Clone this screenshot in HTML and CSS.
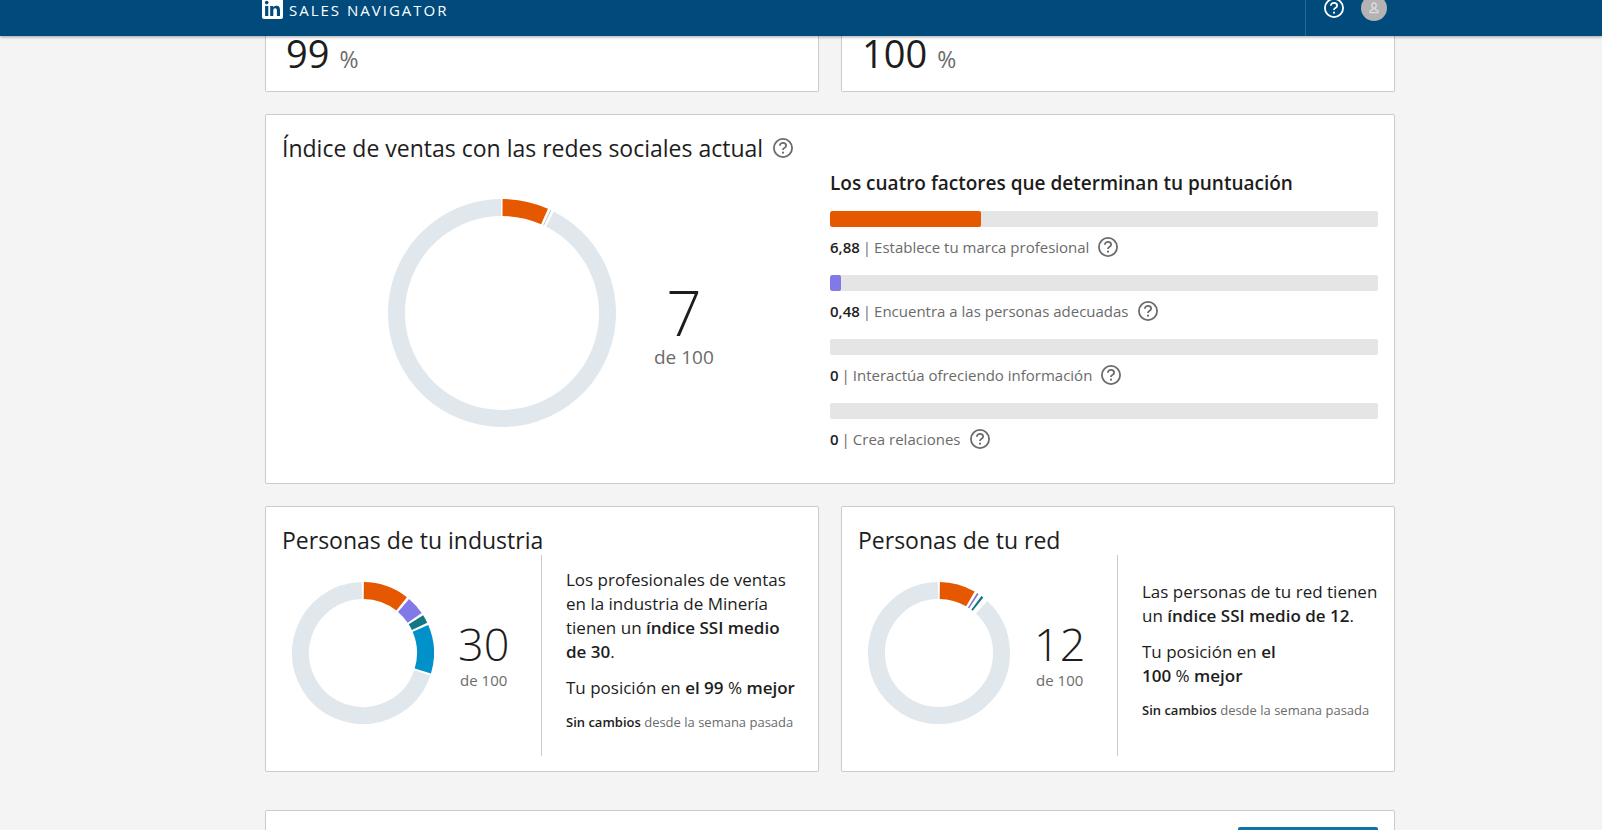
FILE: index.html
```html
<!DOCTYPE html>
<html lang="es">
<head>
<meta charset="utf-8">
<meta name="viewport" content="width=device-width, initial-scale=1">
<title>Sales Navigator</title>
<link rel="stylesheet" href="styles.css">
</head>
<body>
<svg class="defs" width="0" height="0" aria-hidden="true">
  <symbol id="help" viewBox="0 0 24 24">
    <circle cx="12" cy="12" r="9.1" fill="none" stroke="currentColor" stroke-width="1.8"/>
    <path d="M8.9 9.7C8.9 7.9 10.2 6.9 12 6.9s3.1 1 3.1 2.6c0 1.4-.8 2-1.8 2.5-.9.5-1.3.9-1.3 1.9" fill="none" stroke="currentColor" stroke-width="1.8"/>
    <circle cx="12" cy="16.7" r="1.1" fill="currentColor"/>
  </symbol>
</svg>

<header class="topbar">
  <div class="topbar-inner">
    <a class="brand" href="#">
      <svg class="logo" viewBox="0 0 21 21" aria-hidden="true">
        <rect width="21" height="21" rx="2" fill="#fff"/>
        <circle cx="4.7" cy="4.6" r="1.8" fill="#004b7c"/>
        <path d="M3.1 8h3.2v9.9H3.1zM8.2 8h3v1.4c.5-.9 1.6-1.7 3.100-1.700 3.100 0 3.700 2 3.700 4.700v5.500h-3.100V13c0-1.200 0-2.700-1.700-2.700s-1.900 1.300-1.900 2.600v5H8.200z" fill="#004b7c"/>
      </svg>
      <span class="brand-name">SALES NAVIGATOR</span>
    </a>
    <div class="tools">
      <button class="icon-btn" type="button" aria-label="Ayuda"><svg class="icon"><use href="#help"/></svg></button>
      <button class="avatar" type="button" aria-label="Perfil">
        <svg viewBox="0 0 26 26" width="26" height="26" fill="none" stroke="#dedede" stroke-width="1.3">
          <ellipse cx="13" cy="10.500" rx="2.200" ry="2.700"/>
          <path d="M11.800 13.200v1.200L9 16v1.600h8V16l-2.800-1.600v-1.200"/>
        </svg>
      </button>
    </div>
  </div>
</header>

<main class="page">
  <div class="pair">
    <section class="card rank"><span class="rank-value">99</span><span class="rank-unit">%</span></section>
    <section class="card rank"><span class="rank-value">100</span><span class="rank-unit">%</span></section>
  </div>

  <section class="card current">
    <div>
      <h2 class="title">Índice de ventas con las redes sociales actual
        <button class="icon-btn" type="button" aria-label="Ayuda"><svg class="icon"><use href="#help"/></svg></button>
      </h2>
      <div class="chart-large">
        <svg class="donut" width="228" height="228" viewBox="-114 -114 228 228" aria-hidden="true">
          <circle r="105.500" pathLength="360" stroke="#e1e8ed" stroke-dasharray="332.500 360" transform="rotate(-63)"/>
          <circle r="105.500" pathLength="360" stroke="#e55800" stroke-dasharray="23.500 360" transform="rotate(-89.700)"/>
          <circle r="105.500" pathLength="360" stroke="#b9b6cc" stroke-dasharray=".4 360" transform="rotate(-64.800)"/>
        </svg>
        <div class="score"><span class="score-value">7</span><span class="score-of">de 100</span></div>
      </div>
    </div>
    <div class="factors">
      <h3 class="factors-title">Los cuatro factores que determinan tu puntuación</h3>
      <div class="bar"><div class="fill brand-fill" style="width:27.5%"></div></div>
      <div class="factor"><b>6,88</b> <span class="sep">|</span> Establece tu marca profesional
        <button class="icon-btn" type="button" aria-label="Ayuda"><svg class="icon"><use href="#help"/></svg></button></div>
      <div class="bar"><div class="fill people-fill" style="width:1.92%"></div></div>
      <div class="factor"><b>0,48</b> <span class="sep">|</span> Encuentra a las personas adecuadas
        <button class="icon-btn" type="button" aria-label="Ayuda"><svg class="icon"><use href="#help"/></svg></button></div>
      <div class="bar"></div>
      <div class="factor"><b>0</b> <span class="sep">|</span> Interactúa ofreciendo información
        <button class="icon-btn" type="button" aria-label="Ayuda"><svg class="icon"><use href="#help"/></svg></button></div>
      <div class="bar"></div>
      <div class="factor"><b>0</b> <span class="sep">|</span> Crea relaciones
        <button class="icon-btn" type="button" aria-label="Ayuda"><svg class="icon"><use href="#help"/></svg></button></div>
    </div>
  </section>

  <div class="pair">
    <section class="card group">
      <h2 class="title">Personas de tu industria</h2>
      <div class="group-body">
        <div class="chart-small">
          <svg class="donut" width="142" height="142" viewBox="-71 -71 142 142" aria-hidden="true">
            <circle r="62.500" pathLength="360" stroke="#e1e8ed" stroke-dasharray="250.500 360" transform="rotate(18.500)"/>
            <circle r="62.500" pathLength="360" stroke="#e55800" stroke-dasharray="37.500 360" transform="rotate(-89.300)"/>
            <circle r="62.500" pathLength="360" stroke="#8279e8" stroke-dasharray="15.500 360" transform="rotate(-49.600)"/>
            <circle r="62.500" pathLength="360" stroke="#137784" stroke-dasharray="7 360" transform="rotate(-32.100)"/>
            <circle r="62.500" pathLength="360" stroke="#0091ca" stroke-dasharray="40 360" transform="rotate(-23.200)"/>
          </svg>
          <div class="score small"><span class="score-value">30</span><span class="score-of">de 100</span></div>
        </div>
        <div class="summary">
          <p>Los profesionales de ventas en la industria de Minería tienen un <b>índice SSI medio de&nbsp;30</b>.</p>
          <p>Tu posición en <b>el 99&nbsp;<span class="pct">%</span> mejor</b></p>
          <p class="change"><b>Sin cambios</b> desde la semana pasada</p>
        </div>
      </div>
    </section>
    <section class="card group">
      <h2 class="title">Personas de tu red</h2>
      <div class="group-body">
        <div class="chart-small">
          <svg class="donut" width="142" height="142" viewBox="-71 -71 142 142" aria-hidden="true">
            <circle r="62.500" pathLength="360" stroke="#e1e8ed" stroke-dasharray="316 360" transform="rotate(-47)"/>
            <circle r="62.500" pathLength="360" stroke="#e55800" stroke-dasharray="29.500 360" transform="rotate(-89.300)"/>
            <circle r="62.500" pathLength="360" stroke="#8279c8" stroke-dasharray="1.600 360" transform="rotate(-57.600)"/>
            <circle r="62.500" pathLength="360" stroke="#137784" stroke-dasharray="2 360" transform="rotate(-53.300)"/>
          </svg>
          <div class="score small"><span class="score-value">12</span><span class="score-of">de 100</span></div>
        </div>
        <div class="summary">
          <p>Las personas de tu red tienen un <b>índice SSI medio de&nbsp;12</b>.</p>
          <p>Tu posición en <b>el<br>100&nbsp;<span class="pct">%</span> mejor</b></p>
          <p class="change"><b>Sin cambios</b> desde la semana pasada</p>
        </div>
      </div>
    </section>
  </div>

  <section class="card next"><button class="primary" type="button" aria-label="Continuar"></button></section>
</main>
</body>
</html>
```
FILE: styles.css
```css
* { box-sizing: border-box; }

body {
  margin: 0;
  height: 100vh;
  overflow: hidden;
  background: #f4f4f4;
  color: #1d1d1d;
  font-family: "Open Sans", "Noto Sans", sans-serif;
}

h2, h3, p { margin: 0; font-weight: 400; }
b { font-weight: 600; }
button { border: 0; padding: 0; background: none; color: inherit; cursor: pointer; }
.defs { display: block; }

.topbar {
  position: relative;
  z-index: 1;
  height: 36px;
  background: #004b7c;
  color: #fff;
  box-shadow: 0 1px 3px rgba(0, 0, 0, .35);
  clip-path: inset(0 0 -6px 0);
}
.topbar-inner {
  display: flex;
  justify-content: space-between;
  height: 56px;
  margin-top: -20px;
  padding: 0 215px 0 262px;
  position: absolute;
  width: 100%;
}
.brand { display: flex; align-items: center; gap: 6px; color: #fff; text-decoration: none; }
.logo { width: 21px; height: 21px; }
.brand-name { padding-top: 3px; font-size: 15px; line-height: 20px; letter-spacing: 2px; }
.tools {
  display: flex;
  align-items: center;
  gap: 15px;
  padding-left: 16px;
  border-left: 1px solid #2b6790;
}
.icon-btn { display: inline-flex; flex: none; }
.icon { width: 24px; height: 24px; }
.avatar { display: flex; width: 26px; height: 26px; border-radius: 50%; background: #b3b3b3; }

.page { padding: 0 207px 0 265px; }
.card { border: 1px solid #cbcbcb; border-radius: 2px; background: #fff; }
.pair { display: grid; grid-template-columns: 1fr 1fr; gap: 22px; }

.rank {
  display: flex;
  align-items: baseline;
  gap: 10px;
  height: 56px;
  padding: 0 20px;
  border-top: 0;
  border-radius: 0 0 2px 2px;
  line-height: 34px;
}
.rank-value { font-size: 38px; }
.rank-unit { font-size: 23px; color: #6b6b6b; }

.title {
  display: flex;
  align-items: center;
  gap: 8px;
  font-size: 23px;
  line-height: 30px;
}
.title .icon-btn, .factor .icon-btn { color: #6b6b6b; }

.current {
  display: grid;
  grid-template-columns: 1fr 1fr;
  margin: 22px 0;
  padding: 18px 16px 16px;
}
.chart-large { display: flex; align-items: center; gap: 38px; padding: 36px 0 0 106px; }
.donut { flex: none; }
.donut circle { fill: none; stroke-width: 17px; }

.score { display: flex; flex-direction: column; align-items: center; padding-top: 24px; }
.score-value { font-size: 62px; line-height: 64px; font-weight: 300; }
.score-of { font-size: 19px; line-height: 26px; color: #6b6b6b; }
.score.small { padding-top: 6px; }
.small .score-value { font-size: 45px; line-height: 48px; }
.small .score-of { font-size: 15px; line-height: 24px; }

.factors { padding-top: 36px; }
.factors-title { margin-bottom: 14px; font-size: 19px; line-height: 28px; font-weight: 600; }
.bar { height: 16px; border-radius: 2px; background: #e5e5e5; overflow: hidden; }
.fill { height: 100%; border-radius: 2px; }
.brand-fill { background: #e55800; }
.people-fill { background: #8279e8; }
.factor {
  display: flex;
  align-items: center;
  gap: 3px;
  margin: 8px 0 16px;
  font-size: 15px;
  line-height: 24px;
  color: #6b6b6b;
}
.factor b { color: #1d1d1d; }
.factor .icon-btn { margin-left: 4px; }

.group { padding: 18px 16px 15px; }
.group-body { display: flex; min-height: 201px; }
.chart-small {
  display: flex;
  flex: none;
  align-items: center;
  gap: 24px;
  width: 260px;
  padding: 0 0 6px 10px;
  border-right: 1px solid #cbcbcb;
}
.summary {
  display: flex;
  flex: 1;
  flex-direction: column;
  justify-content: center;
  padding-left: 24px;
  font-size: 17px;
  line-height: 24px;
}
.summary p { margin-bottom: 12px; }
.pct { font-weight: 400; }
.summary .change { font-size: 13px; line-height: 20px; color: #6b6b6b; }
.change b { color: #1d1d1d; }

.next { display: flex; justify-content: flex-end; margin-top: 38px; padding: 16px; }
.primary { width: 140px; height: 40px; border-radius: 2px; background: #0f73a5; }
```
